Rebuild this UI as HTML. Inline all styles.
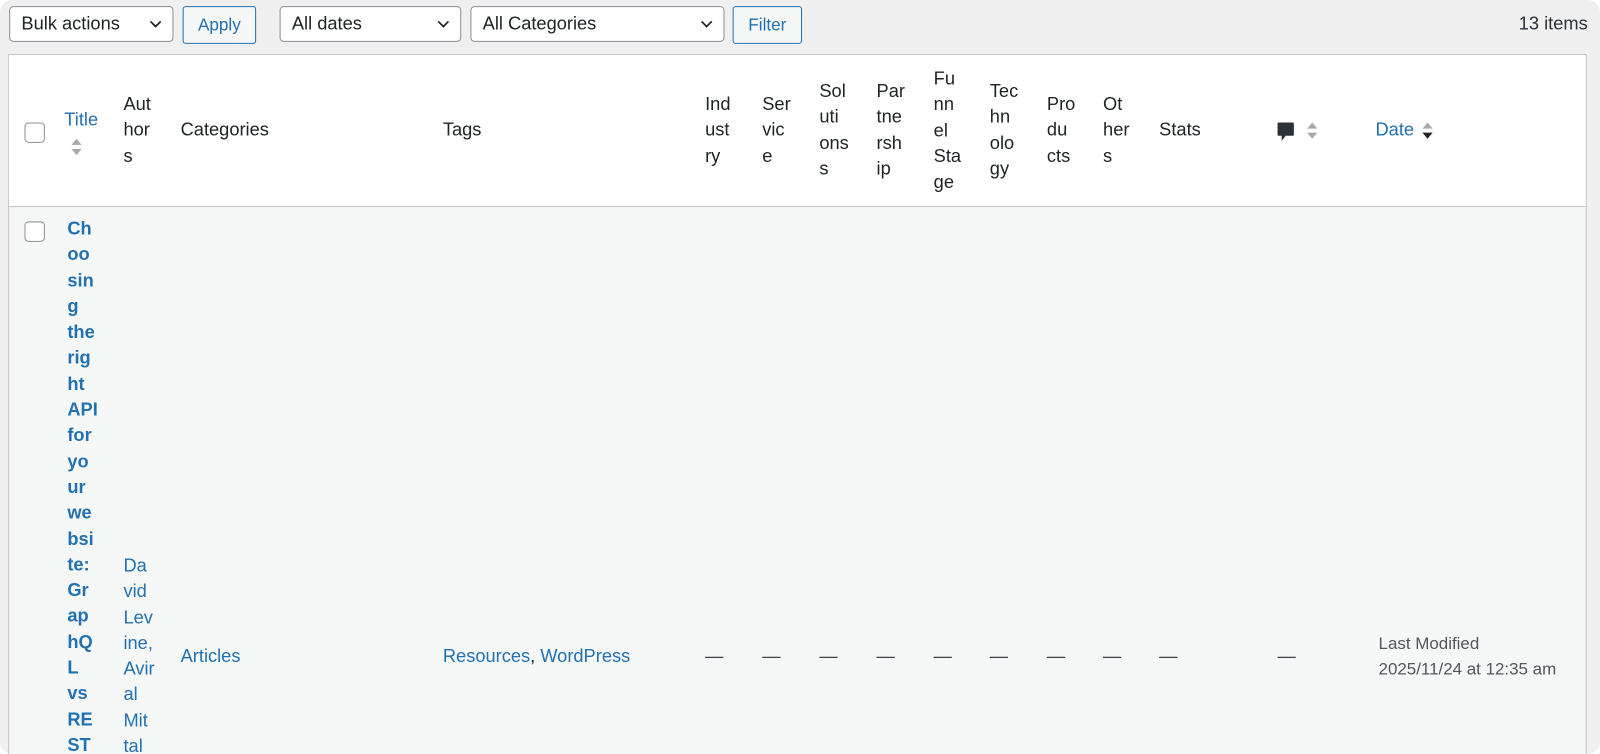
<!DOCTYPE html>
<html><head><meta charset="utf-8"><style>
html,body{margin:0;padding:0;background:#fff;width:1600px;height:754px;overflow:hidden}
#clip{position:absolute;left:0;top:0;width:1600px;height:754px;overflow:hidden}
#w{position:absolute;left:0;top:0;width:1568px;height:739px;overflow:hidden;transform:scale(1.0204);transform-origin:0 0;font-family:"Liberation Sans",Arial,sans-serif;font-size:17.9px;color:#1d2327}
#bg{position:absolute;left:0;top:0;width:1568px;height:739px;background:#f0f0f0;border-radius:12px}
.a{position:absolute;line-height:25.3px;white-space:nowrap}
.sel{position:absolute;top:6px;height:35px;background:#fff;border:1px solid #8c8f94;border-radius:4px;box-sizing:border-box;padding-left:11px;line-height:33px}
.sel svg{position:absolute;right:10px;top:12px}
.btn{position:absolute;top:6px;height:37px;box-sizing:border-box;border:1px solid #2271b1;border-radius:3px;background:#f6f7f7;color:#2271b1;text-align:center;line-height:35px;font-size:16.8px}
#tbl{position:absolute;left:8px;top:53px;width:1547px;height:687px;border:1px solid #c3c4c7;border-bottom:none;box-sizing:border-box;background:#f6f7f7}
#hd{position:absolute;left:0;top:0;right:0;height:148px;background:#fff;border-bottom:1px solid #c3c4c7}
.cb{position:absolute;width:18px;height:18px;border:1px solid #8c8f94;border-radius:4px;background:#fff}
.blue{color:#2271b1}
.b{font-weight:bold}
.d{color:#50575e}
</style></head><body><div id="clip"><div id="w"><div id="bg"></div>
<div class="sel" style="left:9px;width:161px">Bulk actions<svg width="13" height="9" viewBox="0 0 13 9"><path d="M1.5 2l5 5 5-5" fill="none" stroke="#1d2327" stroke-width="1.7"/></svg></div>
<div class="btn" style="left:179px;width:72px">Apply</div>
<div class="sel" style="left:274px;width:178px">All dates<svg width="13" height="9" viewBox="0 0 13 9"><path d="M1.5 2l5 5 5-5" fill="none" stroke="#1d2327" stroke-width="1.7"/></svg></div>
<div class="sel" style="left:461px;width:249px">All Categories<svg width="13" height="9" viewBox="0 0 13 9"><path d="M1.5 2l5 5 5-5" fill="none" stroke="#1d2327" stroke-width="1.7"/></svg></div>
<div class="btn" style="left:718px;width:68px">Filter</div>
<div class="a" style="right:12px;top:11px;color:#2c3338">13 items</div>
<div id="tbl"><div id="hd"></div></div>
<div class="cb" style="left:24px;top:120px"></div>
<div class="a blue" style="left:63px;top:105px">Title</div>
<svg class="a" style="left:69px;top:134px" width="12" height="20"><path d="M1 8L6 2 11 8Z M1 12L6 18 11 12Z" fill="#a7aaad"/></svg>
<div class="a" style="left:121px;top:90px">Aut<br>hor<br>s</div>
<div class="a" style="left:177px;top:115px">Categories</div>
<div class="a" style="left:434px;top:115px">Tags</div>
<div class="a" style="left:691px;top:90px">Ind<br>ust<br>ry</div>
<div class="a" style="left:747px;top:90px">Ser<br>vic<br>e</div>
<div class="a" style="left:803px;top:77px">Sol<br>uti<br>ons<br>s</div>
<div class="a" style="left:859px;top:77px">Par<br>tne<br>rsh<br>ip</div>
<div class="a" style="left:915px;top:65px">Fu<br>nn<br>el<br>Sta<br>ge</div>
<div class="a" style="left:970px;top:77px">Tec<br>hn<br>olo<br>gy</div>
<div class="a" style="left:1026px;top:90px">Pro<br>du<br>cts</div>
<div class="a" style="left:1081px;top:90px">Ot<br>her<br>s</div>
<div class="a" style="left:1136px;top:115px">Stats</div>
<svg class="a" style="left:1251px;top:119px" width="18" height="22"><path d="M2 1H16Q17 1 17 2V13Q17 14 16 14H9L5 19V14H2Q1 14 1 13V2Q1 1 2 1Z" fill="#2c3338"/></svg>
<svg class="a" style="left:1280px;top:118px" width="12" height="20"><path d="M1 8L6 2 11 8Z M1 12L6 18 11 12Z" fill="#a7aaad"/></svg>
<div class="a blue" style="left:1348px;top:115px">Date</div>
<svg class="a" style="left:1393px;top:118px" width="12" height="20"><path d="M1 8L6 2 11 8Z" fill="#a7aaad"/><path d="M1 12L6 18 11 12Z" fill="#1d2327"/></svg>
<div class="cb" style="left:24px;top:217px"></div>
<div class="a blue b" style="left:66px;top:212px">Ch<br>oo<br>sin<br>g<br>the<br>rig<br>ht<br>API<br>for<br>yo<br>ur<br>we<br>bsi<br>te:<br>Gr<br>ap<br>hQ<br>L<br>vs<br>RE<br>ST</div>
<div class="a blue" style="left:121px;top:542px">Da<br>vid<br>Lev<br>ine,<br>Avir<br>al<br>Mit<br>tal</div>
<div class="a blue" style="left:177px;top:631px">Articles</div>
<div class="a blue" style="left:434px;top:631px">Resources<span style="color:#1d2327">,</span> WordPress</div>
<div class="a" style="left:691px;top:631px;color:#3c434a">—</div>
<div class="a" style="left:747px;top:631px;color:#3c434a">—</div>
<div class="a" style="left:803px;top:631px;color:#3c434a">—</div>
<div class="a" style="left:859px;top:631px;color:#3c434a">—</div>
<div class="a" style="left:915px;top:631px;color:#3c434a">—</div>
<div class="a" style="left:970px;top:631px;color:#3c434a">—</div>
<div class="a" style="left:1026px;top:631px;color:#3c434a">—</div>
<div class="a" style="left:1081px;top:631px;color:#3c434a">—</div>
<div class="a" style="left:1136px;top:631px;color:#3c434a">—</div>
<div class="a" style="left:1252px;top:631px;color:#3c434a">—</div>
<div class="a d" style="left:1351px;top:618px;font-size:16.6px">Last Modified<br>2025/11/24 at 12:35 am</div>
</div></div></body></html>
